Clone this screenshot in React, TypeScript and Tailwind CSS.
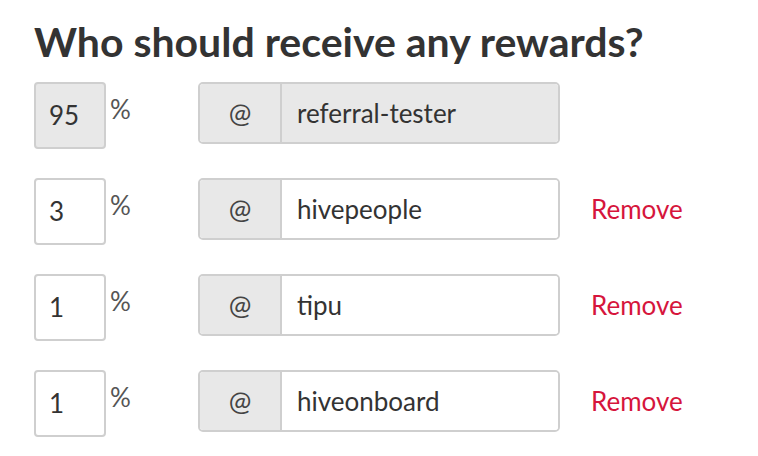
const rows = [
  { pct: '95', user: 'referral-tester', locked: true },
  { pct: '3', user: 'hivepeople', locked: false },
  { pct: '1', user: 'tipu', locked: false },
  { pct: '1', user: 'hiveonboard', locked: false },
];

export default function App() {
  return (
    <div className="w-[758px] h-[456px] bg-white pl-[34px] pt-[20px] text-[#333] font-['Lato',sans-serif]">
      <h2 className="text-[41px] leading-[44px] font-bold text-[#333]">Who should receive any rewards?</h2>
      <div className="mt-[18px] flex flex-col gap-[29px]">
        {rows.map((r) => (
          <div key={r.user} className="flex items-start h-[67px]">
            <div className="w-[164px] flex items-start">
              <div
                className={`w-[72px] h-[67px] border-2 border-[#cfcfcf] rounded-[4px] flex items-center pl-[13px] text-[26px] ${
                  r.locked ? 'bg-[#e8e8e8]' : 'bg-white'
                }`}
              >
                {r.pct}
              </div>
              <span className="ml-[4px] mt-[14px] text-[26px] leading-[26px] text-[#555]">%</span>
            </div>
            <div className="w-[362px] h-[62px] flex border-2 border-[#cfcfcf] rounded-[5px] overflow-hidden">
              <div className="w-[82px] bg-[#e8e8e8] border-r-2 border-[#cfcfcf] flex items-center justify-center text-[27px] text-[#444]">
                @
              </div>
              <div
                className={`flex-1 flex items-center pl-[15px] text-[26px] ${
                  r.locked ? 'bg-[#e8e8e8]' : 'bg-white'
                }`}
              >
                {r.user}
              </div>
            </div>
            {!r.locked && (
              <button className="ml-[31px] h-[62px] flex items-center text-[26px] text-[#d6153c]">Remove</button>
            )}
          </div>
        ))}
      </div>
    </div>
  );
}
